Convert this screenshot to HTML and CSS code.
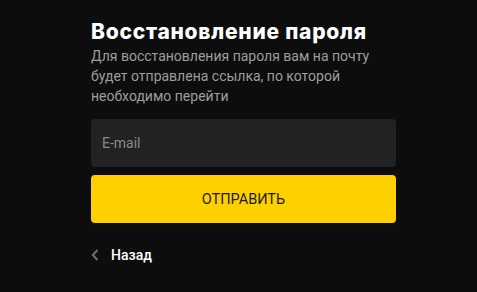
FILE: index.html
```html
<!DOCTYPE html>
<html lang="ru">
<head>
<meta charset="utf-8">
<link rel="stylesheet" href="styles.css">
</head>
<body>
<div class="recover">
  <h1 class="title">Восстановление пароля</h1>
  <p class="desc">Для восстановления пароля вам на почту будет отправлена ссылка, по которой необходимо перейти</p>
  <form class="form">
    <input class="field" type="email" placeholder="E-mail">
    <button class="submit" type="button">ОТПРАВИТЬ</button>
  </form>
  <a class="back" href="#">
    <svg class="back-icon" width="8" height="12" viewBox="0 0 8 12"><path d="M6.5 1 L1.8 6 L6.5 11" fill="none" stroke="#6e6e6e" stroke-width="2"/></svg>
    <span>Назад</span>
  </a>
</div>
</body>
</html>
```
FILE: styles.css
```css
html, body {
  margin: 0;
  background: #0d0d0d;
  height: 100%;
}
body {
  font-family: Roboto, "Liberation Sans", sans-serif;
}
.recover {
  width: 305px;
  margin-left: 91px;
  padding-top: 18px;
  display: flex;
  flex-direction: column;
}
.title {
  margin: 0;
  font-family: Inter, "Noto Sans", sans-serif;
  font-weight: 800;
  font-size: 21px;
  line-height: 28px;
  color: #fff;
  letter-spacing: 0.75px;
}
.desc {
  margin: 0;
  font-size: 14px;
  line-height: 20px;
  color: #9d9d9d;
  width: 280px;
}
.form {
  margin-top: 13px;
  display: flex;
  flex-direction: column;
  gap: 8px;
}
.field {
  box-sizing: border-box;
  height: 48px;
  width: 100%;
  border: 0;
  border-radius: 4px;
  background: #222222;
  padding: 0 11px;
  font-family: Roboto, sans-serif;
  font-size: 14px;
  color: #fff;
  outline: none;
}
.field::placeholder {
  color: #8a8a8a;
}
.submit {
  height: 48px;
  border: 0;
  border-radius: 4px;
  background: #ffd000;
  color: #1b1b1b;
  font-family: Roboto, sans-serif;
  font-size: 14.5px;
  letter-spacing: 0;
}
.back {
  margin-top: 24px;
  display: flex;
  align-items: center;
  gap: 12px;
  color: #fff;
  text-decoration: none;
  font-size: 14px;
  font-weight: 500;
}
.back-icon {
  display: block;
}
```
